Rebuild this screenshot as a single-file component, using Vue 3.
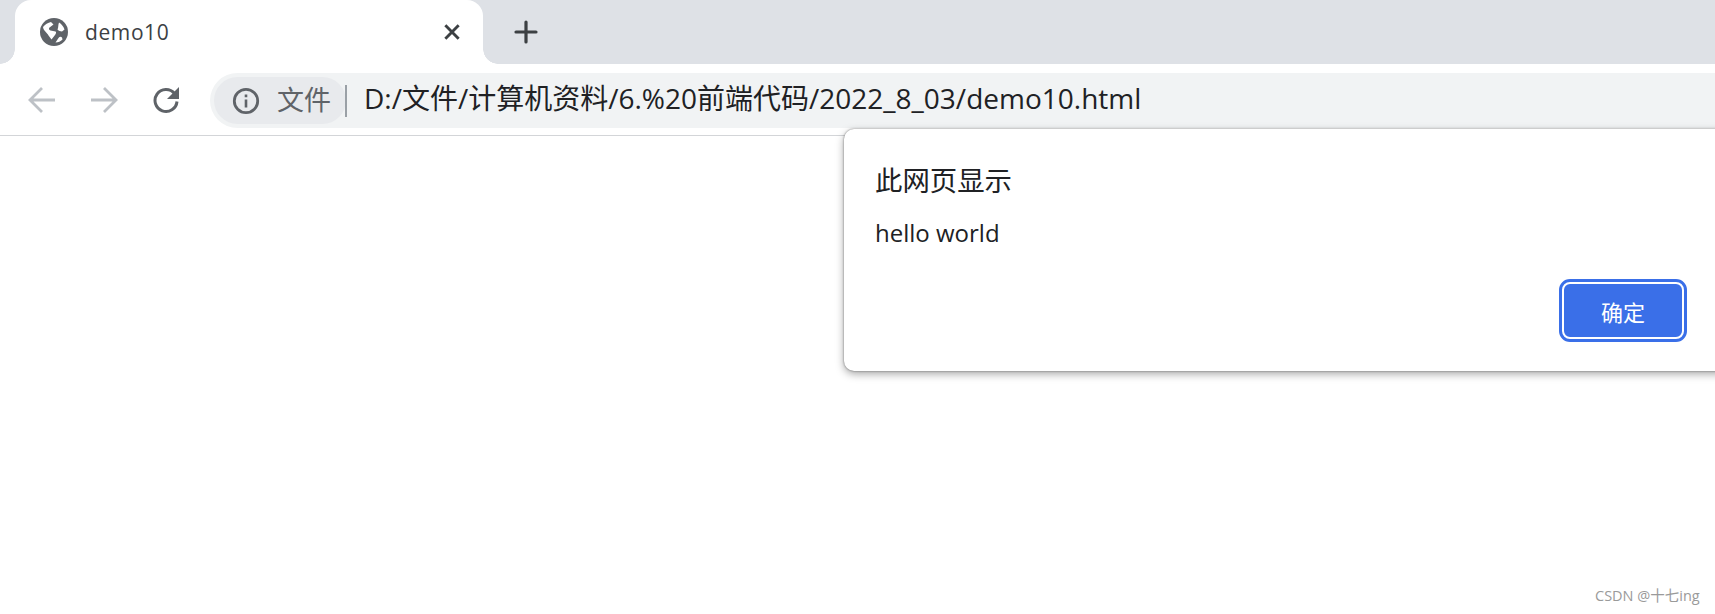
<script setup>
const url = 'D:/文件/计算机资料/6.%20前端代码/2022_8_03/demo10.html'
</script>

<template>
  <div class="page">
    <header class="strip">
      <div class="tab">
        <svg class="globe" viewBox="0 0 28 28" aria-hidden="true">
          <circle cx="14" cy="14" r="14" fill="#5f6368" />
          <path fill="#fff" d="M3 9 C5 6.5 8 4.5 11 4 L13.5 6.5 C12 7.5 11 8.5 9.5 9.5 C8.5 10.5 9 12 10.5 12.5 L15.5 13.5 C16.5 14 16 16 15 17 L11.5 21.5 L8.5 17.5 C7.5 15 3.5 13 3 9Z" />
          <path fill="#fff" d="M19 4.5 C21.5 6 23.5 8.5 24.5 11.5 L22 13.5 C20 13 19 13.5 17.5 11.5 C18.5 9.5 18 7 19 4.5Z" />
          <path fill="#fff" d="M15.5 24.5 L18.5 20 C19.5 18.5 21 18.5 22 19.5 L22.5 21.5 C20.5 23.5 18.5 24.5 15.5 24.5Z" />
        </svg>
        <span class="tab-title">demo10</span>
        <svg class="close" viewBox="0 0 18 18" aria-hidden="true">
          <path d="M3 3 15 15M15 3 3 15" stroke="#3c4043" stroke-width="2.6" fill="none" />
        </svg>
      </div>
      <svg class="plus" viewBox="0 0 24 24" aria-hidden="true">
        <path d="M12 2V22M2 12H22" stroke="#3c4043" stroke-width="3.2" stroke-linecap="round" fill="none" />
      </svg>
    </header>

    <nav class="toolbar">
      <div class="nav-icons">
        <svg class="nav-icon" viewBox="0 0 28 28" aria-hidden="true">
          <path d="M27 14H2M14 2 2 14 14 26" stroke="#bdc1c6" stroke-width="2.8" fill="none" />
        </svg>
        <svg class="nav-icon" viewBox="0 0 28 28" aria-hidden="true">
          <path d="M1 14H26M14 2 26 14 14 26" stroke="#bdc1c6" stroke-width="2.8" fill="none" />
        </svg>
        <svg class="nav-icon" viewBox="0 0 28 28" aria-hidden="true">
          <path d="M22.5 7.5A11 11 0 1 0 25 15.5" stroke="#5f6368" stroke-width="3" fill="none" />
          <path d="M27 1V13H15Z" fill="#5f6368" />
        </svg>
      </div>
      <div class="omnibox">
        <div class="chip">
          <svg class="info" viewBox="0 0 28 28" aria-hidden="true">
            <circle cx="14" cy="14" r="11.7" stroke="#5f6368" stroke-width="2.8" fill="none" />
            <path d="M12.7 12.5h2.6v8h-2.6zM12.7 7.5h2.6v2.7h-2.6z" fill="#5f6368" />
          </svg>
          <span class="chip-text">文件</span>
        </div>
        <i class="sep"></i>
        <span class="url">{{ url }}</span>
      </div>
    </nav>

    <main class="content">
      <section class="dialog">
        <h1 class="title">此网页显示</h1>
        <p class="msg">hello world</p>
        <div class="actions">
          <button class="ok" type="button">确定</button>
        </div>
      </section>
      <span class="mark">CSDN @十七ing</span>
    </main>
  </div>
</template>

<style>
html, body { margin: 0; background: #fff; overflow: hidden; }
</style>

<style scoped>
.page {
  width: 1715px;
  height: 614px;
  display: flex;
  flex-direction: column;
  font-family: "Open Sans", "Noto Sans CJK SC", sans-serif;
  overflow: hidden;
}
.strip {
  height: 64px;
  background: #dee1e6;
  display: flex;
  align-items: center;
  padding-left: 15px;
  box-sizing: border-box;
  flex: none;
}
.tab {
  width: 468px;
  height: 64px;
  background: #fff;
  border-radius: 16px 16px 0 0;
  display: flex;
  align-items: center;
  padding: 0 21px 0 25px;
  box-sizing: border-box;
  position: relative;
}
/* white flares: the grey strip curves away at the foot of the tab */
.tab::before, .tab::after {
  content: "";
  position: absolute;
  bottom: 0;
  width: 15px;
  height: 15px;
}
.tab::before {
  left: -15px;
  background: radial-gradient(circle at 0 0, #dee1e6 14.5px, #fff 15px);
}
.tab::after {
  right: -15px;
  background: radial-gradient(circle at 100% 0, #dee1e6 14.5px, #fff 15px);
}
.globe { width: 28px; height: 28px; flex: none; }
.tab-title {
  margin-left: 17px;
  font-size: 21px;
  color: #3c4043;
  flex: 1;
  letter-spacing: 0.6px;
}
.close { width: 20px; height: 20px; flex: none; }
.plus { width: 24px; height: 24px; margin-left: 31px; flex: none; }
.toolbar {
  height: 72px;
  flex: none;
  background: #fff;
  border-bottom: 1px solid #d3d5d8;
  box-sizing: border-box;
  display: flex;
  align-items: center;
  padding: 2px 0 0 28px;
}
.nav-icons { display: flex; gap: 34px; align-items: center; width: 182px; flex: none; margin-top: -2px; }
.nav-icon { width: 28px; height: 28px; flex: none; }
.omnibox {
  height: 55px;
  flex: 1;
  background: #f1f3f4;
  border-radius: 28px 0 0 28px;
  display: flex;
  align-items: center;
  padding-left: 4px;
  min-width: 0;
}
.chip {
  width: 132px;
  height: 47px;
  background: #e8eaed;
  border-radius: 24px;
  display: flex;
  align-items: center;
  padding-left: 18px;
  box-sizing: border-box;
  flex: none;
}
.info { width: 28px; height: 28px; flex: none; }
.chip-text { margin-left: 17px; font-size: 27px; color: #5f6368; white-space: nowrap; margin-top: -4px; }
.sep { width: 2px; height: 32px; background: #9aa0a6; flex: none; margin-left: -1px; }
.url { margin-left: 17px; font-size: 28px; color: #202124; white-space: nowrap; margin-top: -7px; }
.content { flex: 1; position: relative; background: #fff; }
.dialog {
  position: absolute;
  left: 844px;
  top: -7px;
  width: 890px;
  height: 242px;
  background: #fff;
  border-radius: 10px;
  box-shadow: 0 0 2px rgba(0, 0, 0, 0.5), 0 3px 8px rgba(0, 0, 0, 0.35);
  padding: 30px 31px 0;
  box-sizing: border-box;
}
.title { margin: 0; font-size: 27.4px; font-weight: 400; color: #202124; line-height: 40px; font-family: "Noto Sans CJK SC", sans-serif; }
.msg { margin: 18px 0 0; font-size: 24px; color: #202124; line-height: 32px; }
.actions { position: absolute; left: 718px; top: 153px; }
.ok {
  width: 122px;
  height: 57px;
  display: block;
  background: #3a6fe8;
  color: #fff;
  border: 2px solid #fff;
  outline: 3px solid #3a6fe8;
  outline-offset: 0;
  border-radius: 8px;
  font-size: 22px;
  font-family: "Noto Sans CJK SC", sans-serif;
  padding: 0;
}
.mark { position: absolute; left: 1595px; top: 448px; font-size: 14.5px; color: #9a9a9a; white-space: nowrap; }
</style>
